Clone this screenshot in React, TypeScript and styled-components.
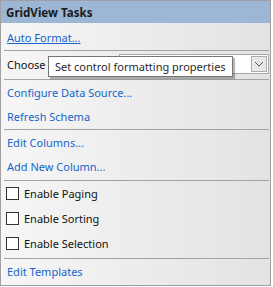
import styled, { createGlobalStyle } from "styled-components";

const GlobalStyle = createGlobalStyle`
  html, body {
    margin: 0;
    padding: 0;
    background: #fff;
  }
  body {
    font-family: "Noto Sans", "Open Sans", "DejaVu Sans", sans-serif;
    font-size: 11px;
  }
`;

const Panel = styled.div`
  width: 271px;
  height: 286px;
  box-sizing: border-box;
  border: 1px solid #a0a0a0;
  display: flex;
  flex-direction: column;
  background: linear-gradient(90deg, #f6f6f6 0%, #e3e3e3 100%);
`;

const Header = styled.div`
  height: 23px;
  display: flex;
  align-items: center;
  padding-left: 5px;
  background: #9cb7d5;
  font-size: 11.6px;
  font-weight: 700;
  color: #1b1b1b;
`;

const Section = styled.div<{ $top?: number; $bottom?: number }>`
  display: flex;
  flex-direction: column;
  padding: ${(p) => p.$top ?? 0}px 0 ${(p) => p.$bottom ?? 1}px;
`;

const Divider = styled.div`
  height: 1px;
  margin: 0 1px 0 3px;
  background: #a3a3a3;
`;

const Row = styled.div<{ $h?: number }>`
  height: ${(p) => p.$h ?? 24}px;
  display: flex;
  align-items: center;
  padding-left: 6px;
  position: relative;
`;

const Link = styled.a<{ $underline?: boolean }>`
  color: #1565c8;
  text-decoration: ${(p) => (p.$underline ? "underline" : "none")};
  cursor: pointer;
`;

const Label = styled.span`
  color: #111;
`;

const Combo = styled.div`
  position: absolute;
  left: 118px;
  top: 3px;
  width: 150px;
  height: 20px;
  box-sizing: border-box;
  border: 1px solid #a6a6a6;
  background: #fff;
  display: flex;
  justify-content: flex-end;
  align-items: center;
  padding-right: 1px;
`;

const DropButton = styled.div`
  width: 16px;
  height: 16px;
  box-sizing: border-box;
  border: 1px solid #acacac;
  background: #e8e8e8;
  display: flex;
  align-items: center;
  justify-content: center;
`;

const Tooltip = styled.div`
  position: absolute;
  left: 47px;
  top: 5px;
  height: 21px;
  box-sizing: border-box;
  padding: 0 6px;
  display: flex;
  align-items: center;
  border: 1px solid #767676;
  background: #fff;
  color: #2a2a2a;
  font-size: 11px;
  white-space: nowrap;
  box-shadow: 2px 2px 1px rgba(0, 0, 0, 0.28);
`;

const CheckRow = styled.label`
  height: 25px;
  display: flex;
  align-items: center;
  gap: 5px;
  padding-left: 5px;
  color: #111;
`;

const Box = styled.span`
  width: 13px;
  height: 13px;
  box-sizing: border-box;
  border: 1px solid #333;
  background: #fff;
`;

const checks = ["Enable Paging", "Enable Sorting", "Enable Selection"];

export default function App() {
  return (
    <>
      <GlobalStyle />
      <Panel>
        <Header>GridView Tasks</Header>
        <Section $top={2}>
          <Row>
            <Link $underline>Auto Format...</Link>
          </Row>
        </Section>
        <Divider />
        <Section>
          <Row $h={27}>
            <Label>Choose</Label>
            <Combo>
              <DropButton>
                <svg width="10" height="6" viewBox="0 0 10 6">
                  <path d="M1 1 L5 5 L9 1" fill="none" stroke="#555" strokeWidth="1" />
                </svg>
              </DropButton>
            </Combo>
            <Tooltip>Set control formatting properties</Tooltip>
          </Row>
        </Section>
        <Divider />
        <Section>
          <Row>
            <Link>Configure Data Source...</Link>
          </Row>
          <Row>
            <Link>Refresh Schema</Link>
          </Row>
        </Section>
        <Divider />
        <Section>
          <Row>
            <Link>Edit Columns...</Link>
          </Row>
          <Row $h={25}>
            <Link>Add New Column...</Link>
          </Row>
        </Section>
        <Divider />
        <Section $bottom={2}>
          {checks.map((c) => (
            <CheckRow key={c}>
              <Box />
              {c}
            </CheckRow>
          ))}
        </Section>
        <Divider />
        <Section>
          <Row $h={25}>
            <Link>Edit Templates</Link>
          </Row>
        </Section>
      </Panel>
    </>
  );
}
